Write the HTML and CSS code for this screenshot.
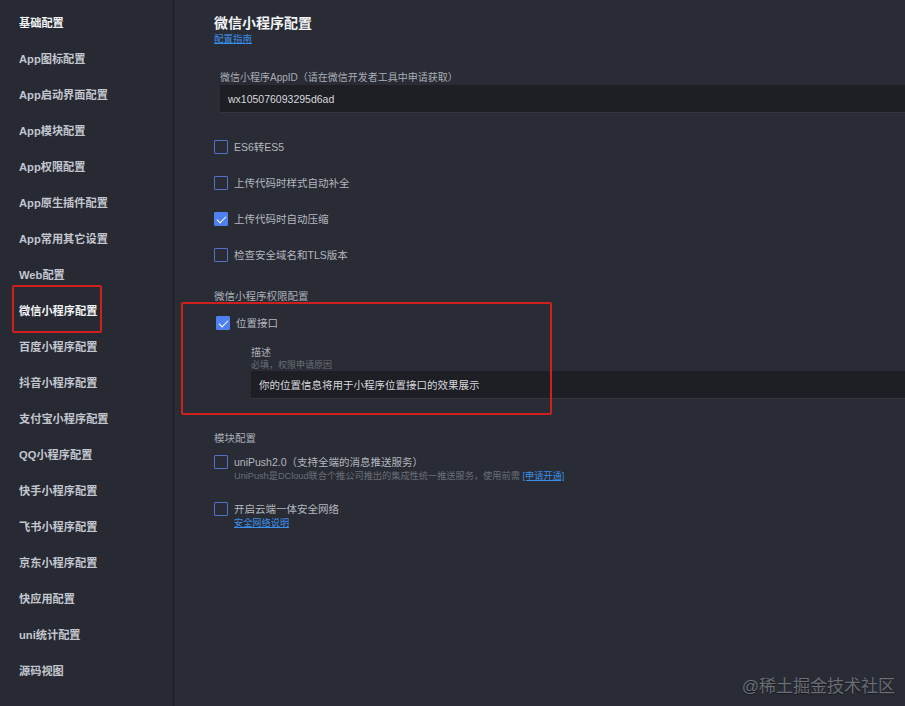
FILE: index.html
```html
<!DOCTYPE html>
<html lang="zh-CN">
<head>
    <meta charset="UTF-8">
    <title>manifest.json</title>
    <link rel="stylesheet" href="styles.css">
</head>
<body>
    <div class="layout">
        <ul class="sidebar">
            <li class="nav-item first">基础配置</li>
            <li class="nav-item">App图标配置</li>
            <li class="nav-item">App启动界面配置</li>
            <li class="nav-item">App模块配置</li>
            <li class="nav-item">App权限配置</li>
            <li class="nav-item">App原生插件配置</li>
            <li class="nav-item">App常用其它设置</li>
            <li class="nav-item">Web配置</li>
            <li class="nav-item active"><span class="mark">微信小程序配置</span></li>
            <li class="nav-item">百度小程序配置</li>
            <li class="nav-item">抖音小程序配置</li>
            <li class="nav-item">支付宝小程序配置</li>
            <li class="nav-item">QQ小程序配置</li>
            <li class="nav-item">快手小程序配置</li>
            <li class="nav-item">飞书小程序配置</li>
            <li class="nav-item">京东小程序配置</li>
            <li class="nav-item">快应用配置</li>
            <li class="nav-item">uni统计配置</li>
            <li class="nav-item">源码视图</li>
        </ul>

        <div class="main">
            <h1 class="title">微信小程序配置</h1>
            <a class="link guide">配置指南</a>

            <div class="field">
                <div class="field-label">微信小程序AppID（请在微信开发者工具中申请获取）</div>
                <div class="input">wx105076093295d6ad</div>
            </div>

            <div class="checks">
                <label class="check"><span class="box"></span>ES6转ES5</label>
                <label class="check"><span class="box"></span>上传代码时样式自动补全</label>
                <label class="check"><span class="box on"></span>上传代码时自动压缩</label>
                <label class="check"><span class="box"></span>检查安全域名和TLS版本</label>
            </div>

            <div class="section-label">微信小程序权限配置</div>
            <div class="perm">
                <label class="check"><span class="box on"></span>位置接口</label>
                <div class="perm-desc">
                    <div class="desc-title">描述</div>
                    <div class="desc-hint">必填，权限申请原因</div>
                    <div class="input">你的位置信息将用于小程序位置接口的效果展示</div>
                </div>
            </div>

            <div class="section-label module">模块配置</div>
            <div class="module-item">
                <label class="check"><span class="box"></span>uniPush2.0（支持全端的消息推送服务）</label>
                <div class="hint">UniPush是DCloud联合个推公司推出的集成性统一推送服务，使用前需 <a class="link">[申请开通]</a></div>
            </div>
            <div class="module-item">
                <label class="check"><span class="box"></span>开启云端一体安全网络</label>
                <div class="hint"><a class="link">安全网络说明</a></div>
            </div>
        </div>
    </div>
    <div class="watermark">@稀土掘金技术社区</div>
</body>
</html>
```

FILE: styles.css
```css
* {
    margin: 0;
    padding: 0;
    box-sizing: border-box;
}

body {
    width: 905px;
    height: 706px;
    overflow: hidden;
    background-color: #292c35;
    font-family: "Liberation Sans", "Noto Sans CJK SC", sans-serif;
    color: #c2c5cc;
}

.layout {
    display: flex;
    height: 706px;
}

.sidebar {
    list-style: none;
    width: 174px;
    flex-shrink: 0;
    background-color: #272a33;
    border-right: 1px solid #1d1f25;
    padding-top: 5px;
}

.nav-item {
    height: 36px;
    line-height: 36px;
    padding-left: 19px;
    font-size: 11.2px;
    font-weight: bold;
    color: #c3c6cf;
}

.nav-item.first,
.nav-item.active {
    color: #f2f3f5;
}

.mark {
    display: inline-block;
    position: relative;
}

.mark::after {
    content: "";
    position: absolute;
    left: -7px;
    right: -5px;
    top: -8px;
    bottom: -4px;
    border: 2px solid #d0201d;
    border-radius: 2px;
}

.main {
    flex: 1;
    padding-left: 40px;
    padding-top: 14px;
    min-width: 0;
    overflow: hidden;
}

.title {
    font-size: 14px;
    font-weight: bold;
    color: #f2f3f5;
    line-height: 18px;
}

.link {
    color: #3b8fe8;
    text-decoration: underline;
    cursor: pointer;
}

.guide {
    display: block;
    font-size: 9.5px;
    line-height: 12px;
    margin-top: 1px;
}

.field {
    margin-top: 26px;
    margin-left: 6px;
}

.field-label {
    font-size: 10px;
    line-height: 14px;
    color: #a9adb6;
}

.input {
    height: 28px;
    line-height: 28px;
    background-color: #1e1f24;
    border-bottom: 1px solid #33363f;
    padding-left: 8px;
    font-size: 10.5px;
    color: #d6d8dd;
    width: 720px;
}

.checks {
    margin-top: 27px;
    display: flex;
    flex-direction: column;
    gap: 22px;
}

.check {
    display: flex;
    align-items: center;
    gap: 6px;
    font-size: 10.5px;
    line-height: 14px;
    color: #b4b7bf;
}

.box {
    width: 14px;
    height: 14px;
    border: 1px solid #5670c4;
    border-radius: 1px;
    flex-shrink: 0;
    position: relative;
}

.box.on {
    background-color: #4f80f2;
    border-color: #4f80f2;
}

.box.on::after {
    content: "";
    position: absolute;
    left: 4px;
    top: 1px;
    width: 4px;
    height: 8px;
    border-right: 1.5px solid #fff;
    border-bottom: 1.5px solid #fff;
    transform: rotate(45deg);
}

.section-label {
    margin-top: 27px;
    font-size: 10.5px;
    line-height: 14px;
    color: #a9adb6;
}

.perm {
    position: relative;
    margin-top: 13px;
    padding-left: 2px;
}

.perm::after {
    content: "";
    position: absolute;
    left: -33px;
    top: -14px;
    width: 367px;
    height: 109px;
    border: 2px solid #d0201d;
    border-radius: 2px;
}

.perm-desc {
    margin-top: 16px;
    margin-left: 35px;
}

.desc-title {
    font-size: 10px;
    line-height: 13px;
    color: #a9adb6;
}

.desc-hint {
    font-size: 9px;
    line-height: 12px;
    color: #6a6e78;
}

.section-label.module {
    margin-top: 32px;
}

.module-item {
    margin-top: 10px;
}

.module-item + .module-item {
    margin-top: 18px;
}

.hint {
    padding-left: 20px;
    font-size: 9.2px;
    line-height: 15px;
    color: #6a6e78;
}

.watermark {
    position: absolute;
    right: 10px;
    bottom: 9px;
    font-size: 17px;
    color: rgba(200, 203, 210, 0.45);
    text-shadow: 0 1px 1px rgba(0, 0, 0, 0.4);
}
```
